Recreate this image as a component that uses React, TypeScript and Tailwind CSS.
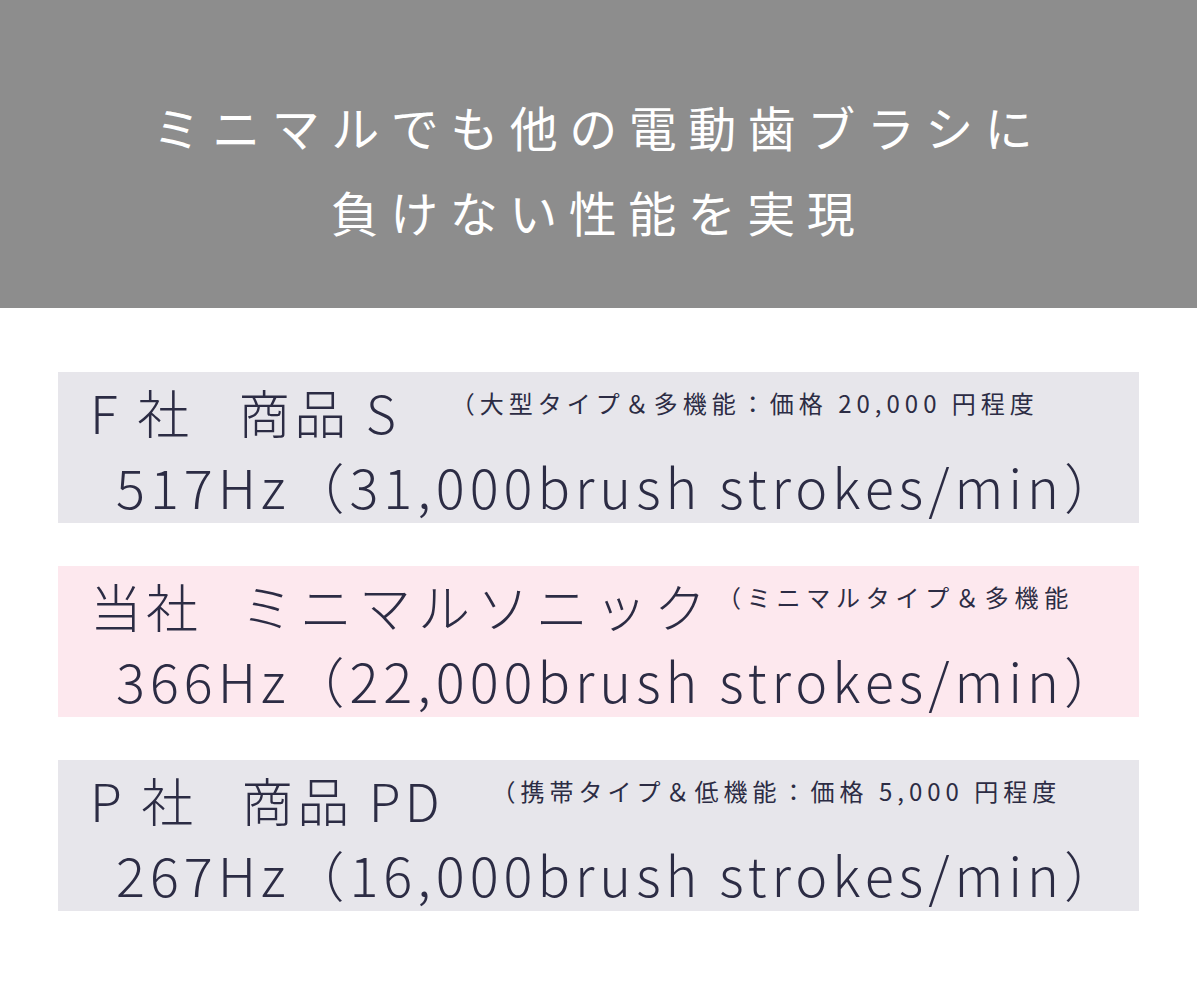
const font = {
  fontFamily: '"Noto Sans CJK JP", "Noto Sans", sans-serif',
};

type Row = {
  maker: string;
  product: string;
  note: string;
  hz: string;
  bg: string;
  productClass: string;
  noteClass: string;
};

const rows: Row[] = [
  {
    maker: "F 社",
    product: "商品 S",
    note: "（大型タイプ＆多機能：価格 20,000 円程度",
    hz: "517Hz（31,000brush strokes/min）",
    bg: "bg-[#e7e6eb]",
    productClass: "ml-[45px]",
    noteClass: "ml-[51px] tracking-[5px]",
  },
  {
    maker: "当社",
    product: "ミニマルソニック",
    note: "（ミニマルタイプ＆多機能",
    hz: "366Hz（22,000brush strokes/min）",
    bg: "bg-[#fde8ee]",
    productClass: "ml-[39px] tracking-[7px]",
    noteClass: "ml-[4px] tracking-[5.75px]",
  },
  {
    maker: "P 社",
    product: "商品 PD",
    note: "（携帯タイプ＆低機能：価格 5,000 円程度",
    hz: "267Hz（16,000brush strokes/min）",
    bg: "bg-[#e7e6eb]",
    productClass: "ml-[44px]",
    noteClass: "ml-[48px] tracking-[5px]",
  },
];

export default function App() {
  return (
    <div className="w-[1197px] h-[995px] bg-white text-[#2c2c44]" style={font}>
      {/* header */}
      <div className="h-[308px] bg-[#8d8d8d] pt-[85px] flex flex-col items-center text-white text-[48px] leading-[85px] tracking-[11.5px]">
        <p className="-mt-[1px]">ミニマルでも他の電動歯ブラシに</p>
        <p>負けない性能を実現</p>
      </div>

      <div className="flex flex-col gap-[43px] pt-[64px] px-[58px]">
        {rows.map((r) => (
          <div key={r.maker} className={`${r.bg} h-[151px] pl-[32px] pt-[8px]`}>
            <div className="flex items-start text-[52px] leading-[64px] tracking-[4px] font-light">
              <span>{r.maker}</span>
              <span className={r.productClass}>{r.product}</span>
              <span className={`mt-[7px] text-[24px] leading-[32px] font-normal ${r.noteClass}`}>{r.note}</span>
            </div>
            <p className="pl-[26px] mt-[10px] text-[54px] leading-[64px] tracking-[5px] font-light">{r.hz}</p>
          </div>
        ))}
      </div>
    </div>
  );
}
